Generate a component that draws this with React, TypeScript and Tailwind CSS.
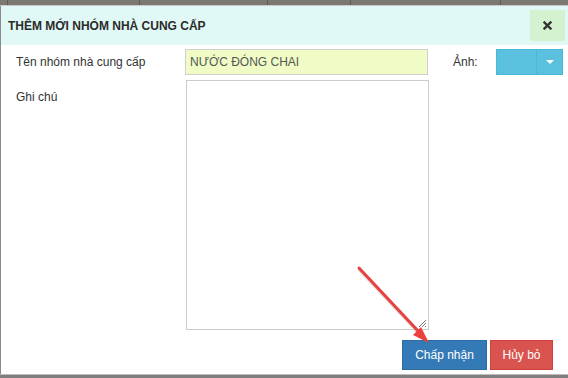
import React from "react";

const font = { fontFamily: '"Liberation Sans", Arial, sans-serif' };

export default function App() {
  return (
    <div className="relative w-[568px] h-[378px] flex flex-col bg-white overflow-hidden" style={font}>
      {/* background table strip */}
      <div className="h-[5px] bg-[#7b7772] flex shrink-0">
        <div className="w-[8px] border-r border-[#5e5b57]" />
        <div className="w-[132px] border-r border-[#5e5b57]" />
        <div className="w-[128px] border-r border-[#5e5b57]" />
        <div className="w-[83px] border-r border-[#5e5b57]" />
        <div className="w-[150px] border-r border-[#5e5b57]" />
      </div>
      <div className="h-px bg-[#c9c9c9] shrink-0" />

      <div className="flex-1 flex flex-col border-l border-[#8a8a8a] min-h-0">
        {/* header */}
        <div className="h-[39px] bg-[#e1f9f6] flex items-center justify-between pl-[7px] pr-[3px] shrink-0">
          <h1 className="text-[12px] font-bold text-[#2b2b2b]">THÊM MỚI NHÓM NHÀ CUNG CẤP</h1>
          <button className="w-[35px] h-[31px] bg-[#d4f2cf] flex items-center justify-center">
            <svg width="9" height="9" viewBox="0 0 9 9">
              <path d="M1.5 1.5 L7.5 7.5 M7.5 1.5 L1.5 7.5" stroke="#333" strokeWidth="2.4" strokeLinecap="square" />
            </svg>
          </button>
        </div>

        {/* body */}
        <div className="flex-1 flex flex-col pl-[15px] text-[12px] text-[#333]">
          <div className="flex items-center h-[26px] mt-[4px]">
            <label className="w-[169px]">Tên nhóm nhà cung cấp</label>
            <div className="w-[243px] h-[26px] bg-[#effcc5] border border-[#cfcfcf] flex items-center px-[4px] text-[#555]">
              NƯỚC ĐÓNG CHAI
            </div>
            <label className="ml-[25px] w-[43px]">Ảnh:</label>
            <div className="w-[67px] h-[26px] bg-[#5bc0de] border border-[#46b8da] flex">
              <div className="w-[40px] border-r border-[#46b8da]" />
              <div className="flex-1 flex items-center justify-center">
                <svg width="8" height="4" viewBox="0 0 8 4">
                  <path d="M0 0 L8 0 L4 4 Z" fill="#fff" />
                </svg>
              </div>
            </div>
          </div>

          <div className="flex mt-[5px]">
            <label className="w-[170px] pt-[8px]">Ghi chú</label>
            <div className="relative w-[243px] h-[250px] border border-[#cccccc] bg-white">
              <svg className="absolute right-[1px] bottom-[1px]" width="9" height="9" viewBox="0 0 9 9">
                <path d="M8 1 L1 8 M8 4 L4 8 M8 7 L7 8" stroke="#777" strokeWidth="1" />
              </svg>
            </div>
          </div>

          <div className="flex justify-end gap-[3px] mt-[10px] pr-[15px]">
            <button className="w-[85px] h-[30px] bg-[#337ab7] border border-[#2e6da4] text-white text-[12px]">
              Chấp nhận
            </button>
            <button className="w-[63px] h-[30px] bg-[#d9534f] border border-[#d43f3a] text-white text-[12px]">
              Hủy bỏ
            </button>
          </div>
        </div>
      </div>

      <div className="h-px bg-[#bdbdbd] shrink-0" />
      <div className="h-[3px] bg-[#7f7f7f] shrink-0" />

      {/* annotation arrow */}
      <svg className="absolute left-0 top-0 pointer-events-none" width="568" height="378">
        <path d="M359 269 L421 335" stroke="#b8b8b8" strokeOpacity="0.5" strokeWidth="4" strokeLinecap="round" transform="translate(1,1)" />
        <path d="M359 268 L420 333" stroke="#ea4040" strokeWidth="3" strokeLinecap="round" />
        <path d="M429 343 L413 335 L421 327 Z" fill="#ea4040" />
      </svg>
    </div>
  );
}
